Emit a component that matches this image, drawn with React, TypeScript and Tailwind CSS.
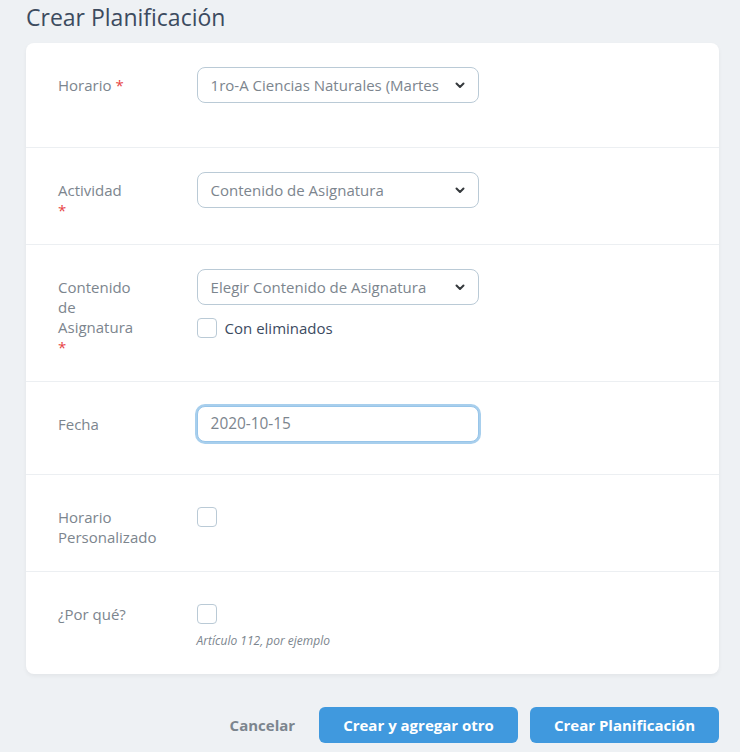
import React from 'react';

const font = { fontFamily: '"Open Sans", Lato, sans-serif' };

function Chevron() {
  return (
    <svg className="w-[10px] h-[7px] shrink-0" viewBox="0 0 10 7" fill="none">
      <path d="M1.5 1.5L5 5L8.5 1.5" stroke="#35393c" strokeWidth={2} strokeLinecap="round" strokeLinejoin="round" />
    </svg>
  );
}

function Select({ value }: { value: string }) {
  return (
    <div className="h-9 w-full flex items-center justify-between gap-2 rounded-lg border border-[#bacad6] bg-white pl-[13px] pr-[13px]">
      <span className="text-[15px] text-[#7c858e] whitespace-nowrap">{value}</span>
      <Chevron />
    </div>
  );
}

function Checkbox() {
  return <span className="block w-5 h-5 rounded border border-[#bacad6] bg-white shrink-0" />;
}

function Required() {
  return <span className="text-[#e74444]">*</span>;
}

export default function App() {
  return (
    <div className="min-h-screen bg-[#eef1f4] pl-[26px] pr-[21px]" style={font}>
      <h1 className="pt-[3px] text-[23px] leading-[28px] text-[#3c4b5f] font-normal mb-[12px]">Crear Planificación</h1>

      <div className="bg-white rounded-lg shadow-[0_2px_4px_0_rgba(0,0,0,0.05)] overflow-hidden">
        {/* Horario */}
        <div className="flex border-b border-[#eceff2]">
          <div className="w-1/5 px-8 py-6">
            <label className="inline-block pt-2 text-[15px] leading-5 text-[#7c858e]">
              Horario <Required />
            </label>
          </div>
          <div className="w-1/2 px-8 py-6">
            <Select value="1ro-A Ciencias Naturales (Martes" />
            <div className="h-5" />
          </div>
        </div>

        {/* Actividad */}
        <div className="flex border-b border-[#eceff2]">
          <div className="w-1/5 px-8 py-6">
            <label className="block pt-2 text-[15px] leading-5 text-[#7c858e]">
              Actividad
              <br />
              <Required />
            </label>
          </div>
          <div className="w-1/2 px-8 py-6">
            <Select value="Contenido de Asignatura" />
          </div>
        </div>

        {/* Contenido de Asignatura */}
        <div className="flex border-b border-[#eceff2]">
          <div className="w-1/5 px-8 py-6">
            <label className="block pt-2 text-[15px] leading-5 text-[#7c858e] w-[80px]">
              Contenido de Asignatura
              <br />
              <Required />
            </label>
          </div>
          <div className="w-1/2 px-8 py-6">
            <Select value="Elegir Contenido de Asignatura" />
            <div className="mt-3 flex items-center gap-2">
              <Checkbox />
              <span className="text-[15px] text-[#3c4b5f]">Con eliminados</span>
            </div>
          </div>
        </div>

        {/* Fecha */}
        <div className="flex border-b border-[#eceff2]">
          <div className="w-1/5 px-8 py-6">
            <label className="block pt-2 text-[15px] leading-5 text-[#7c858e]">Fecha</label>
          </div>
          <div className="w-1/2 px-8 pt-6 pb-8">
            <div className="h-9 w-full flex items-center rounded-lg border border-[#98c5e9] shadow-[0_0_0_2px_#a8cfed] bg-white px-[13px]">
              <span className="text-[15.4px] text-[#7c858e]">2020-10-15</span>
            </div>
          </div>
        </div>

        {/* Horario Personalizado */}
        <div className="flex border-b border-[#eceff2]">
          <div className="w-1/5 px-8 py-6">
            <label className="block pt-2 text-[15px] leading-5 text-[#7c858e]">
              Horario Personalizado
            </label>
          </div>
          <div className="w-1/2 px-8 py-6">
            <div className="pt-2">
              <Checkbox />
            </div>
          </div>
        </div>

        {/* Por qué */}
        <div className="flex">
          <div className="w-1/5 px-8 py-6">
            <label className="block pt-2 text-[15px] leading-5 text-[#7c858e]">¿Por qué?</label>
          </div>
          <div className="w-1/2 px-8 py-6">
            <div className="pt-2">
              <Checkbox />
            </div>
            <p className="mt-2 text-xs leading-[18px] italic text-[#7c858e]">Artículo 112, por ejemplo</p>
          </div>
        </div>
      </div>

      <div className="mt-[33px] flex items-center justify-end">
        <button className="mr-6 text-[15px] font-bold text-[#7c858e]">Cancelar</button>
        <button className="mr-3 h-9 px-6 rounded-md bg-[#4099de] text-[15px] font-bold text-white">
          Crear y agregar otro
        </button>
        <button className="h-9 px-6 rounded-md bg-[#4099de] text-[15px] font-bold text-white">
          Crear Planificación
        </button>
      </div>
    </div>
  );
}
